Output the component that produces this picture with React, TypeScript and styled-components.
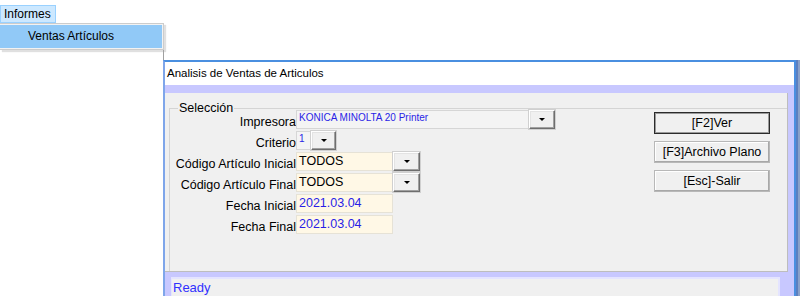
import styled, { createGlobalStyle } from 'styled-components'

const GlobalStyle = createGlobalStyle`
  html, body { margin: 0; padding: 0; background: #ffffff; }
  body { font-family: "Liberation Sans", Arial, sans-serif; font-size: 12px; color: #000; }
`

const Screen = styled.div`
  position: relative;
  width: 800px;
  height: 296px;
  overflow: hidden;
  background: #ffffff;
`

const MenuBar = styled.div`
  display: flex;
  padding-top: 5px;
  height: 18px;
`

const MenuItem = styled.div<{ $active?: boolean }>`
  height: 18px;
  padding: 0 4px 0 3px;
  line-height: 17px;
  font-size: 12px;
  box-sizing: border-box;
  background: ${({ $active }) => ($active ? '#cce8ff' : 'transparent')};
  border: 1px solid ${({ $active }) => ($active ? '#99d1ff' : 'transparent')};
`

const DropMenu = styled.div`
  position: absolute;
  left: 0;
  top: 23px;
  width: 164px;
  height: 27px;
  box-sizing: border-box;
  background: #f2f2f2;
  border: 1px solid #cccccc;
  border-left: none;
  padding: 1px 1px 0 0;
  box-shadow: 2px 2px 1px rgba(0, 0, 0, 0.12);
`

const DropItem = styled.div`
  height: 23px;
  background: #91c9f7;
  line-height: 23px;
  text-align: center;
  font-size: 12px;
  padding-right: 20px;
`

const BackEdge = styled.div`
  position: absolute;
  left: 163px;
  top: 50px;
  width: 1px;
  height: 10px;
  background: #a0a0a0;
`

const Desktop = styled.div`
  display: flex;
  margin-top: 37px;
  margin-left: 163px;
  height: 236px;
`

const Window = styled.div`
  flex: 1;
  display: flex;
  flex-direction: column;
  border-top: 2px solid #4a8fe0;
  border-left: 2px solid #7fa6ea;
  border-right: 2px solid #4a8fe0;
  background: #c8c8ff;
`

const SideStrip = styled.div`
  width: 4px;
  background: linear-gradient(to right, #5b7fc0 0, #5b7fc0 2px, #8aa0c8 2px);
`

const TitleArea = styled.div`
  height: 23px;
  background: #ffffff;
  padding-left: 2px;
  line-height: 22px;
  font-size: 11.5px;
`

const Body = styled.div`
  flex: 1;
  display: flex;
  flex-direction: column;
  padding: 8px 6px 0 0;
`

const Panel = styled.div`
  height: 179px;
  box-sizing: border-box;
  background: #f0f0f0;
  border-right: 1px solid #bdbdbd;
  border-bottom: 1px solid #bdbdbd;
  display: flex;
  padding: 10px 0 0 4px;
`

const Group = styled.fieldset`
  flex: 1;
  margin: 0;
  padding: 0;
  border: 1px solid #d4d4d4;
  border-right: none;
  border-bottom: none;
  display: flex;
  align-items: flex-start;
`

const Legend = styled.legend`
  margin-left: 8px;
  padding: 0 1px;
  font-size: 12.5px;
  line-height: 10px;
  height: 10px;
`

const Form = styled.div`
  display: grid;
  grid-template-columns: 126px auto;
  grid-auto-rows: 19px;
  row-gap: 2px;
  margin-top: -3px;
`

const Label = styled.div`
  text-align: right;
  font-size: 12.5px;
  line-height: 14px;
  padding-top: 5px;
  white-space: nowrap;
`

const FieldRow = styled.div`
  display: flex;
`

const Field = styled.div<{ $w: number; $cream?: boolean; $blue?: boolean; $small?: boolean }>`
  width: ${({ $w }) => $w}px;
  height: 19px;
  box-sizing: border-box;
  background: ${({ $cream }) => ($cream ? '#fff8e6' : '#f4f4f4')};
  border: 1px solid ${({ $cream }) => ($cream ? '#e6e2d6' : '#d6d6d6')};
  color: ${({ $blue }) => ($blue ? '#2a1fe6' : '#000')};
  font-size: ${({ $small }) => ($small ? '10px' : '12.5px')};
  line-height: ${({ $small }) => ($small ? '14px' : '17px')};
  padding-left: 2px;
  white-space: nowrap;
  overflow: hidden;
`

const DropButton = styled.div<{ $w?: number }>`
  width: ${({ $w }) => $w ?? 27}px;
  height: 19px;
  box-sizing: border-box;
  background: #f0f0f0;
  border-top: 1px solid #ffffff;
  border-left: 1px solid #ffffff;
  border-right: 1px solid #6e6e6e;
  border-bottom: 1px solid #6e6e6e;
  box-shadow: inset -1px -1px 0 #a0a0a0, inset 1px 1px 0 #e3e3e3, 0 0 0 1px #d0d0d0;
  display: flex;
  align-items: center;
  justify-content: center;
`

const Arrow = styled.span`
  width: 0;
  height: 0;
  border-left: 3px solid transparent;
  border-right: 3px solid transparent;
  border-top: 3px solid #000;
`

const Buttons = styled.div`
  display: flex;
  flex-direction: column;
  gap: 7px;
  margin-left: auto;
  margin-right: 17px;
  margin-top: -1px;
`

const Button = styled.div<{ $default?: boolean }>`
  width: 116px;
  height: 22px;
  box-sizing: border-box;
  background: #f0f0f0;
  border: 1px solid ${({ $default }) => ($default ? '#2b2b2b' : '#b8b8b8')};
  box-shadow: ${({ $default }) =>
    $default ? 'inset 0 0 0 1px #9a9a9a' : 'inset -1px -1px 0 #a8a8a8, inset 1px 1px 0 #ffffff'};
  text-align: center;
  line-height: 20px;
  font-size: 12.5px;
`

const StatusArea = styled.div`
  flex: 1;
  padding: 5px 8px 0 6px;
`

const StatusBox = styled.div`
  height: 100%;
  box-sizing: border-box;
  background: #f0f0f0;
  border-top: 2px solid #e4e4ff;
  border-left: 1px solid #e4e4ff;
  border-right: 2px solid #e4e4ff;
  color: #3030ff;
  font-size: 13px;
  line-height: 16px;
  padding: 1px 0 0 1px;
`

type Row = {
  label: string
  value: string
  width: number
  cream?: boolean
  blue?: boolean
  small?: boolean
  drop?: number
}

const rows: Row[] = [
  { label: 'Impresora', value: 'KONICA MINOLTA 20 Printer', width: 233, blue: true, small: true, drop: 26 },
  { label: 'Criterio', value: '1', width: 15, blue: true, small: true, drop: 25 },
  { label: 'Código Artículo Inicial', value: 'TODOS', width: 97, cream: true, drop: 27 },
  { label: 'Código Artículo Final', value: 'TODOS', width: 97, cream: true, drop: 27 },
  { label: 'Fecha Inicial', value: '2021.03.04', width: 97, cream: true, blue: true },
  { label: 'Fecha Final', value: '2021.03.04', width: 97, cream: true, blue: true },
]

export default function App() {
  return (
    <>
      <GlobalStyle />
      <Screen>
        <MenuBar>
          <MenuItem $active>Informes</MenuItem>
        </MenuBar>
        <Desktop>
          <Window>
            <TitleArea>Analisis de Ventas de Articulos</TitleArea>
            <Body>
              <Panel>
                <Group>
                  <Legend>Selección</Legend>
                  <Form>
                    {rows.flatMap(r => [
                      <Label key={r.label + '-l'}>{r.label}</Label>,
                      <FieldRow key={r.label + '-f'}>
                        <Field $w={r.width} $cream={r.cream} $blue={r.blue} $small={r.small}>
                          {r.value}
                        </Field>
                        {r.drop && (
                          <DropButton $w={r.drop}>
                            <Arrow />
                          </DropButton>
                        )}
                      </FieldRow>,
                    ])}
                  </Form>
                  <Buttons>
                    <Button $default>[F2]Ver</Button>
                    <Button>[F3]Archivo Plano</Button>
                    <Button>[Esc]-Salir</Button>
                  </Buttons>
                </Group>
              </Panel>
              <StatusArea>
                <StatusBox>Ready</StatusBox>
              </StatusArea>
            </Body>
          </Window>
          <SideStrip />
        </Desktop>
        <DropMenu>
          <DropItem>Ventas Artículos</DropItem>
        </DropMenu>
        <BackEdge />
      </Screen>
    </>
  )
}
